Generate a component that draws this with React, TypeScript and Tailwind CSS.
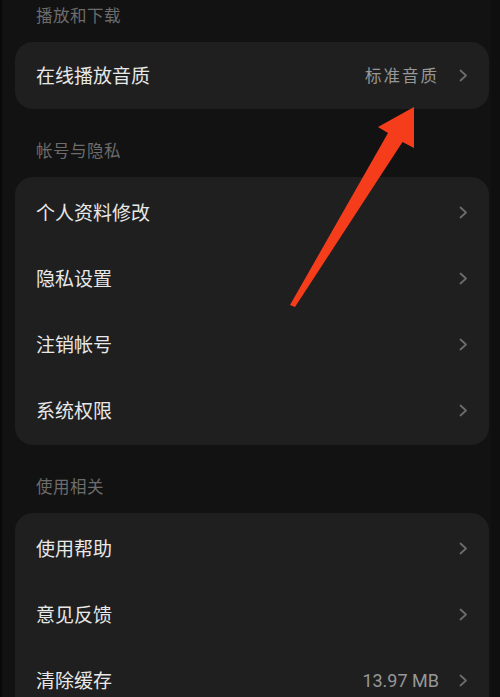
const font = "font-['Noto_Sans_CJK_SC','Noto_Sans',sans-serif]";

type Row = { label: string; value?: string };

const sections: { title: string; rows: Row[] }[] = [
  { title: "播放和下载", rows: [{ label: "在线播放音质", value: "标准音质" }] },
  {
    title: "帐号与隐私",
    rows: [
      { label: "个人资料修改" },
      { label: "隐私设置" },
      { label: "注销帐号" },
      { label: "系统权限" },
    ],
  },
  {
    title: "使用相关",
    rows: [
      { label: "使用帮助" },
      { label: "意见反馈" },
      { label: "清除缓存", value: "13.97 MB" },
    ],
  },
];

function Chevron() {
  return (
    <svg width="9" height="13" viewBox="0 0 9 13" className="shrink-0">
      <polyline
        points="1.5,1.5 7,6.5 1.5,11.5"
        fill="none"
        stroke="#6c6c6c"
        strokeWidth="1.8"
        strokeLinecap="round"
        strokeLinejoin="round"
      />
    </svg>
  );
}

function SettingRow({ row, single }: { row: Row; single: boolean }) {
  return (
    <div className={`flex items-center pl-[21px] pr-[21px] ${single ? "h-[67px]" : "h-[66px]"}`}>
      <span className="flex-1 text-[19px] text-[#e8e8e8]">{row.label}</span>
      {row.value && (
        <span
          className={`mr-[20px] text-[#979797] ${
            row.value.includes("MB")
              ? "font-['Roboto','Noto_Sans',sans-serif] text-[18px]"
              : "text-[16.5px] tracking-[2px]"
          }`}
        >
          {row.value}
        </span>
      )}
      <Chevron />
    </div>
  );
}

function Arrow() {
  return (
    <svg className="pointer-events-none absolute left-0 top-0" width="500" height="697">
      <polygon
        points="414,107 414,148 402.5,142 295,307 290,305 388,133 378,127"
        fill="#f53c1b"
      />
    </svg>
  );
}

export default function App() {
  return (
    <div className={`relative h-[697px] w-[500px] overflow-hidden bg-[#121212] ${font}`}>
      <div className="absolute inset-y-0 left-0 w-[2px] bg-[#090909]" />
      <div className="absolute inset-y-0 right-0 w-[9px] bg-[#0f0f0f]" />
      <div className="-mt-[12px] pl-[15px] pr-[11px]">
        {sections.map((section) => (
          <div key={section.title} className="mb-[14px]">
            <div className="flex h-[54px] items-center pl-[21px] text-[16.5px] tracking-[0.5px] text-[#6c6c6c]">
              {section.title}
            </div>
            <div className={`rounded-[18px] bg-[#1f1f1f] ${section.rows.length > 1 ? "py-[2px]" : ""}`}>
              {section.rows.map((row) => (
                <SettingRow key={row.label} row={row} single={section.rows.length === 1} />
              ))}
            </div>
          </div>
        ))}
      </div>
      <Arrow />
    </div>
  );
}
